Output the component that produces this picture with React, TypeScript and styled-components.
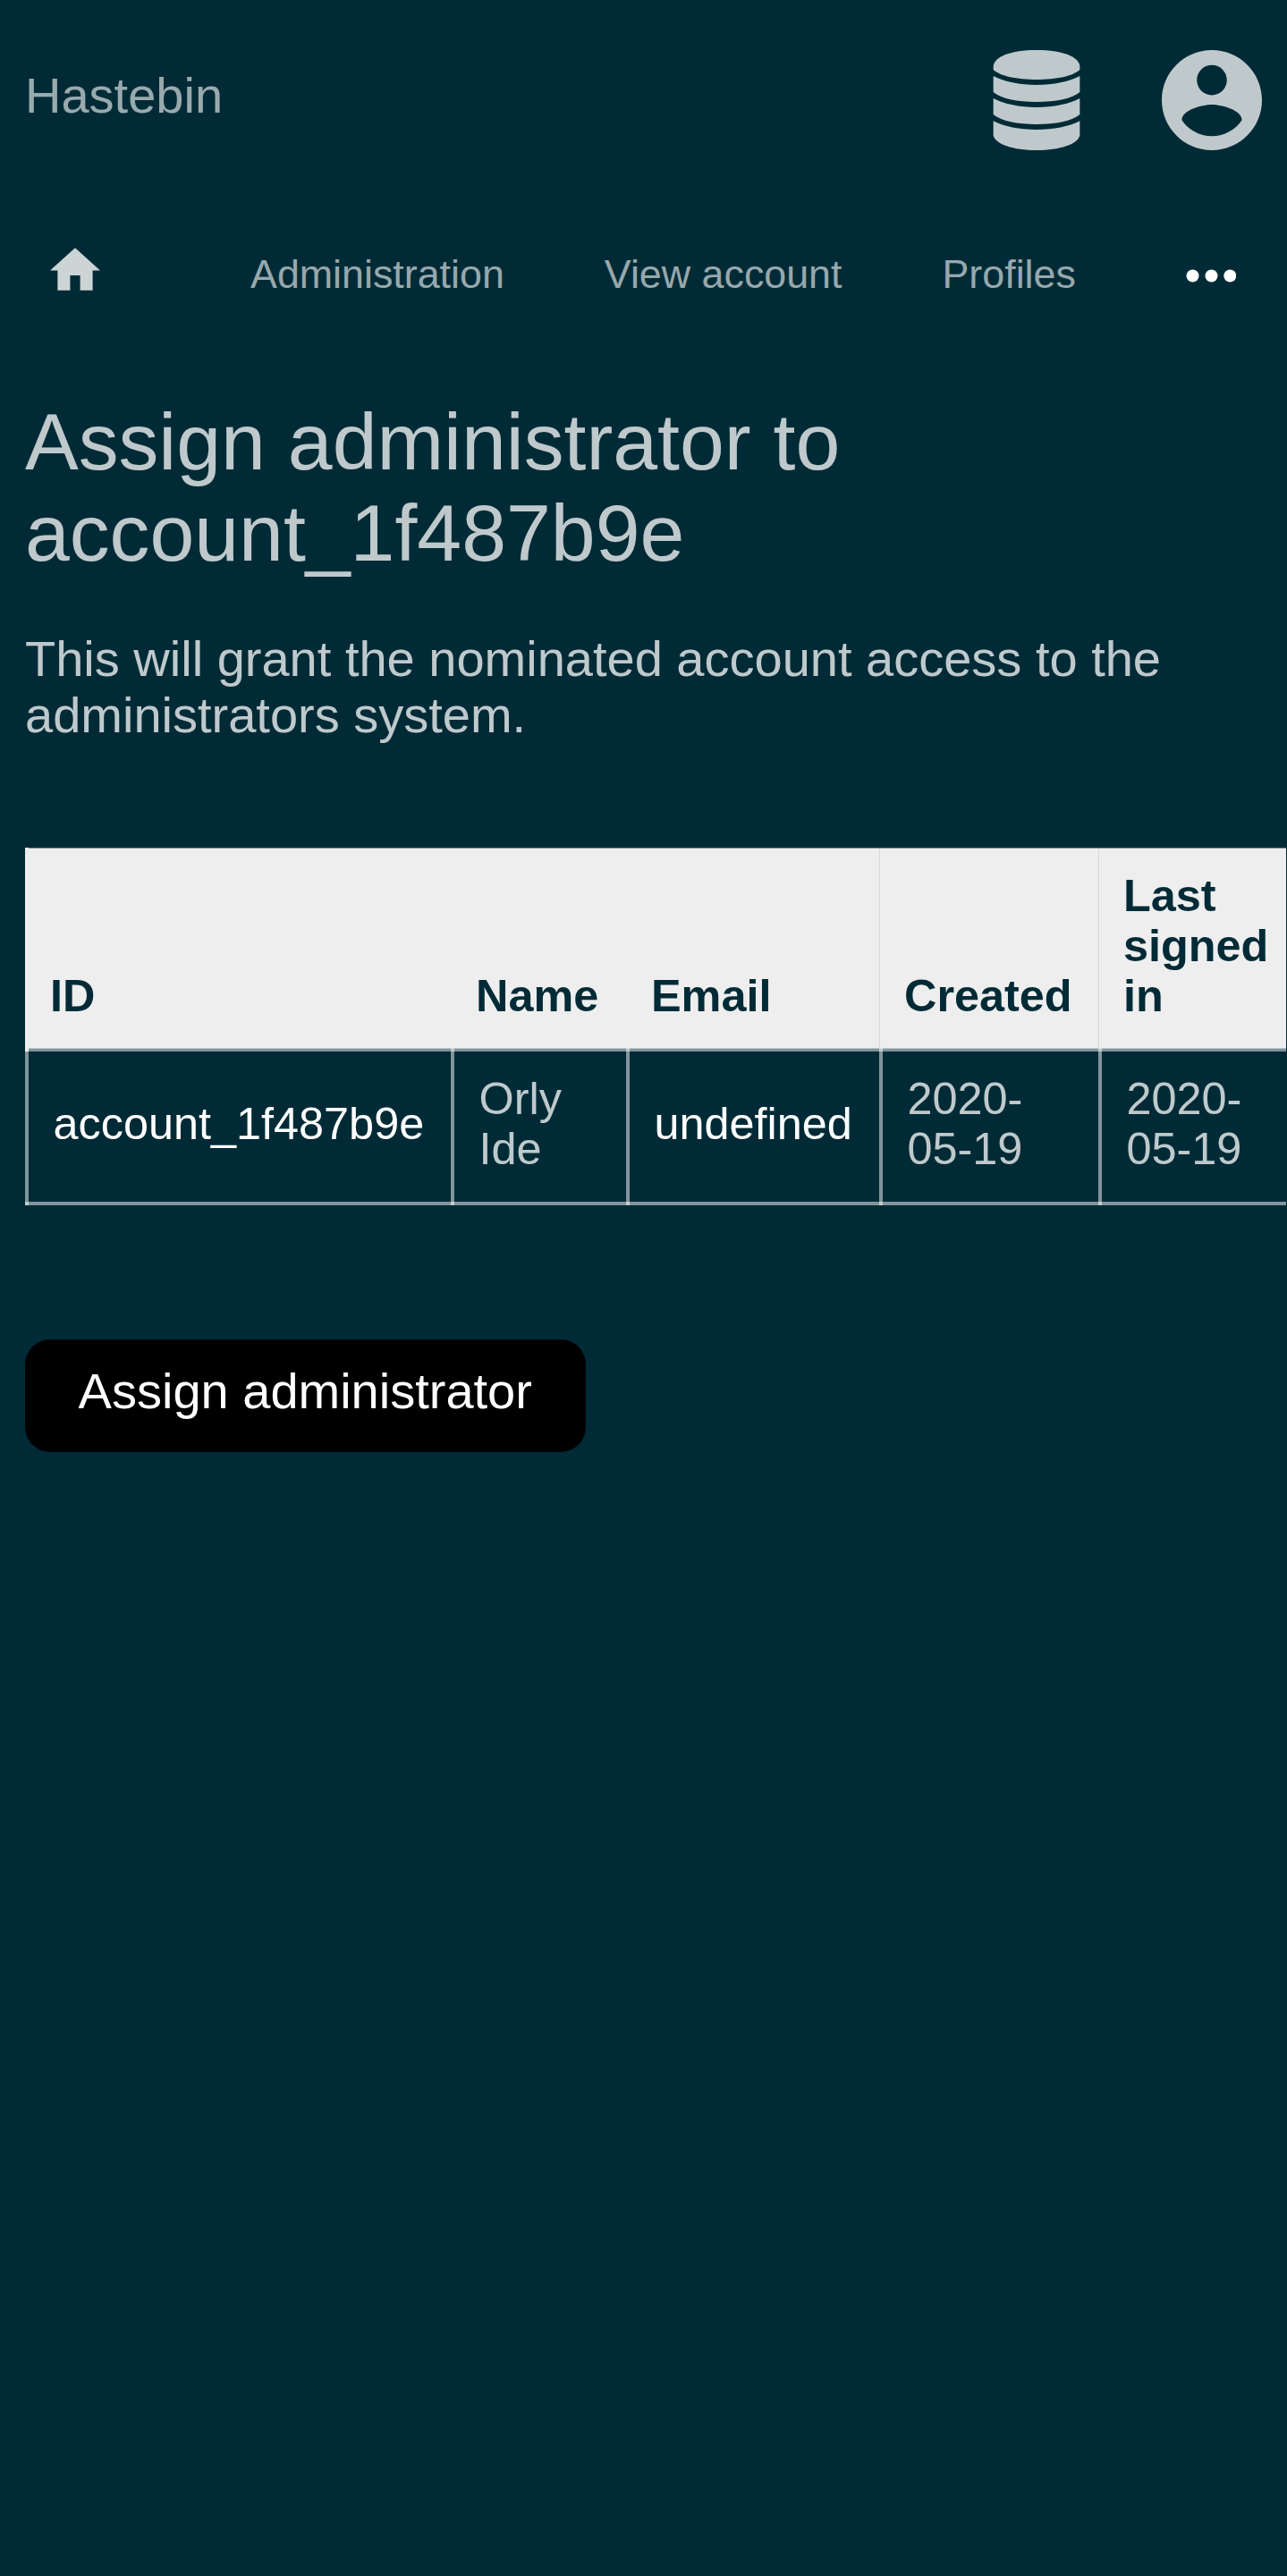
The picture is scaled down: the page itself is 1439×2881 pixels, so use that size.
import React from "react";
import styled, { createGlobalStyle } from "styled-components";

const GlobalStyle = createGlobalStyle`
  html, body {
    margin: 0;
    background: #002b36;
    overflow: hidden;
  }
`;

const Page = styled.div`
  box-sizing: border-box;
  min-height: 2881px;
  width: 1438px;
  overflow: hidden;
  background: #002b36;
  color: rgba(255, 255, 255, 0.75);
  font-family: "Liberation Sans", Arial, sans-serif;
  font-size: 56px;
  line-height: 63px;
`;

const Header = styled.header`
  display: flex;
  align-items: center;
  justify-content: space-between;
  height: 224px;
  padding: 0 27.5px 0 28px;
`;

const Brand = styled.a`
  color: rgba(255, 255, 255, 0.6);
  padding-bottom: 11px;
`;

const HeaderIcons = styled.div`
  display: flex;
  align-items: center;
  gap: 84px;
`;

const HeaderIcon = styled.svg`
  display: block;
  width: 112px;
  height: 112px;
  fill: rgba(255, 255, 255, 0.75);
`;

const Nav = styled.nav`
  display: flex;
  align-items: center;
  height: 168px;
  padding: 0 56px;
  color: rgba(255, 255, 255, 0.6);
  font-size: 44.8px;
  line-height: 50px;
`;

const HomeIcon = styled.svg`
  display: block;
  width: 56px;
  height: 48px;
  margin: 0 168px 14px 0;
  fill: rgba(255, 255, 255, 0.8);
`;

const NavLink = styled.a`
  margin-right: 112px;
  padding-bottom: 4px;
  white-space: nowrap;
`;

const MoreIcon = styled.svg`
  display: block;
  width: 56px;
  height: 15px;
  margin-left: auto;
  fill: #fff;
`;

const Main = styled.main`
  padding: 51px 0 0 28px;
`;

const Title = styled.h1`
  margin: 0;
  width: 1380px;
  font-size: 89.6px;
  font-weight: 400;
  line-height: 102px;
`;

const Intro = styled.p`
  margin: 58px 0 117px;
  width: 1380px;
`;

const Table = styled.table`
  table-layout: fixed;
  width: 1454px;
  border-collapse: collapse;
  font-size: 50.4px;
  line-height: 56px;
`;

const HeadCell = styled.th<{ $line?: boolean }>`
  height: 168px;
  padding: 26px 28px 30px 26px;
  background-image: ${(p) =>
      p.$line
        ? "linear-gradient(#d4d8d9, #d4d8d9)"
        : "linear-gradient(transparent, transparent)"},
    linear-gradient(
      #778d92 1px,
      #eee 1px calc(100% - 2px),
      #778d92 calc(100% - 2px) calc(100% - 1px),
      transparent calc(100% - 1px)
    );
  background-origin: border-box;
  background-position: right 1px top 1px, 0 0;
  background-size: 1px calc(100% - 3px), 100% 100%;
  background-repeat: no-repeat;
  color: #002b36;
  text-align: left;
  vertical-align: bottom;

  &:first-child {
    padding-left: 24px;
    border-left: 4px solid #eee;
  }
`;

const Cell = styled.td<{ $bright?: boolean }>`
  height: 112px;
  padding: 25px 0 31px 27.5px;
  border: 4px solid rgba(255, 255, 255, 0.5);
  color: ${(p) => (p.$bright ? "#fff" : "inherit")};
  vertical-align: middle;
`;

const Submit = styled.button`
  display: block;
  margin: 150px 0 0;
  padding: 0 0 12px;
  width: 626.5px;
  height: 126px;
  border: 0;
  border-radius: 28px;
  background: #000;
  color: #fff;
  font: inherit;
`;

const columns = [
  { label: "ID", width: 476, value: ["account_1f487b9e"], bright: true },
  { label: "Name", width: 196, value: ["Orly", "Ide"] },
  { label: "Email", width: 283, value: ["undefined"], bright: true, line: true },
  { label: "Created", width: 245, value: ["2020-", "05-19"], line: true },
  { label: "Last signed in", width: 250, value: ["2020-", "05-19"] },
];

const Line = styled.span`
  display: block;
`;

export default function App() {
  return (
    <Page>
      <GlobalStyle />
      <Header>
        <Brand>Hastebin</Brand>
        <HeaderIcons>
          <HeaderIcon viewBox="0 0 336 336">
            <path d="M23 57C23 22 82 0 168 0S313 22 313 57V66C290 87 235 99 168 99S46 87 23 66Z" />
            <path d="M23 87C60 106 110 117 168 117S276 106 313 87V141C288 163 232 174 168 174S48 163 23 141Z" />
            <path d="M23 162C60 181 110 192 168 192S276 181 313 162V216C288 238 232 249 168 249S48 238 23 216Z" />
            <path d="M23 238C60 257 110 267 168 267S276 257 313 238V285C308 316 246 336 168 336S28 316 23 285Z" />
          </HeaderIcon>
          <HeaderIcon viewBox="2 2 20 20">
            <path d="M12 2C6.48 2 2 6.48 2 12s4.48 10 10 10 10-4.48 10-10S17.52 2 12 2zm0 3c1.66 0 3 1.34 3 3s-1.34 3-3 3-3-1.34-3-3 1.34-3 3-3zm0 14.2c-2.5 0-4.71-1.28-6-3.22.03-1.99 4-3.08 6-3.08 1.99 0 5.97 1.09 6 3.08-1.29 1.94-3.5 3.22-6 3.22z" />
          </HeaderIcon>
        </HeaderIcons>
      </Header>
      <Nav>
        <HomeIcon viewBox="2 3 20 17">
          <path d="M10 20v-6h4v6h5v-8h3L12 3 2 12h3v8z" />
        </HomeIcon>
        <NavLink>Administration</NavLink>
        <NavLink>View account</NavLink>
        <NavLink>Profiles</NavLink>
        <MoreIcon viewBox="0 0 56 15">
          <circle cx="7.5" cy="7.5" r="7" />
          <circle cx="28.5" cy="7.5" r="7" />
          <circle cx="49.3" cy="7.5" r="7" />
        </MoreIcon>
      </Nav>
      <Main>
        <Title>Assign administrator to account_1f487b9e</Title>
        <Intro>
          This will grant the nominated account access to the administrators
          system.
        </Intro>
        <Table>
          <colgroup>
            {columns.map((c) => (
              <col key={c.label} width={c.width} />
            ))}
          </colgroup>
          <thead>
            <tr>
              {columns.map((c) => (
                <HeadCell key={c.label} $line={c.line}>
                  {c.label}
                </HeadCell>
              ))}
            </tr>
          </thead>
          <tbody>
            <tr>
              {columns.map((c) => (
                <Cell key={c.label} $bright={c.bright}>
                  {c.value.map((text) => (
                    <Line key={text}>{text}</Line>
                  ))}
                </Cell>
              ))}
            </tr>
          </tbody>
        </Table>
        <Submit>Assign administrator</Submit>
      </Main>
    </Page>
  );
}
